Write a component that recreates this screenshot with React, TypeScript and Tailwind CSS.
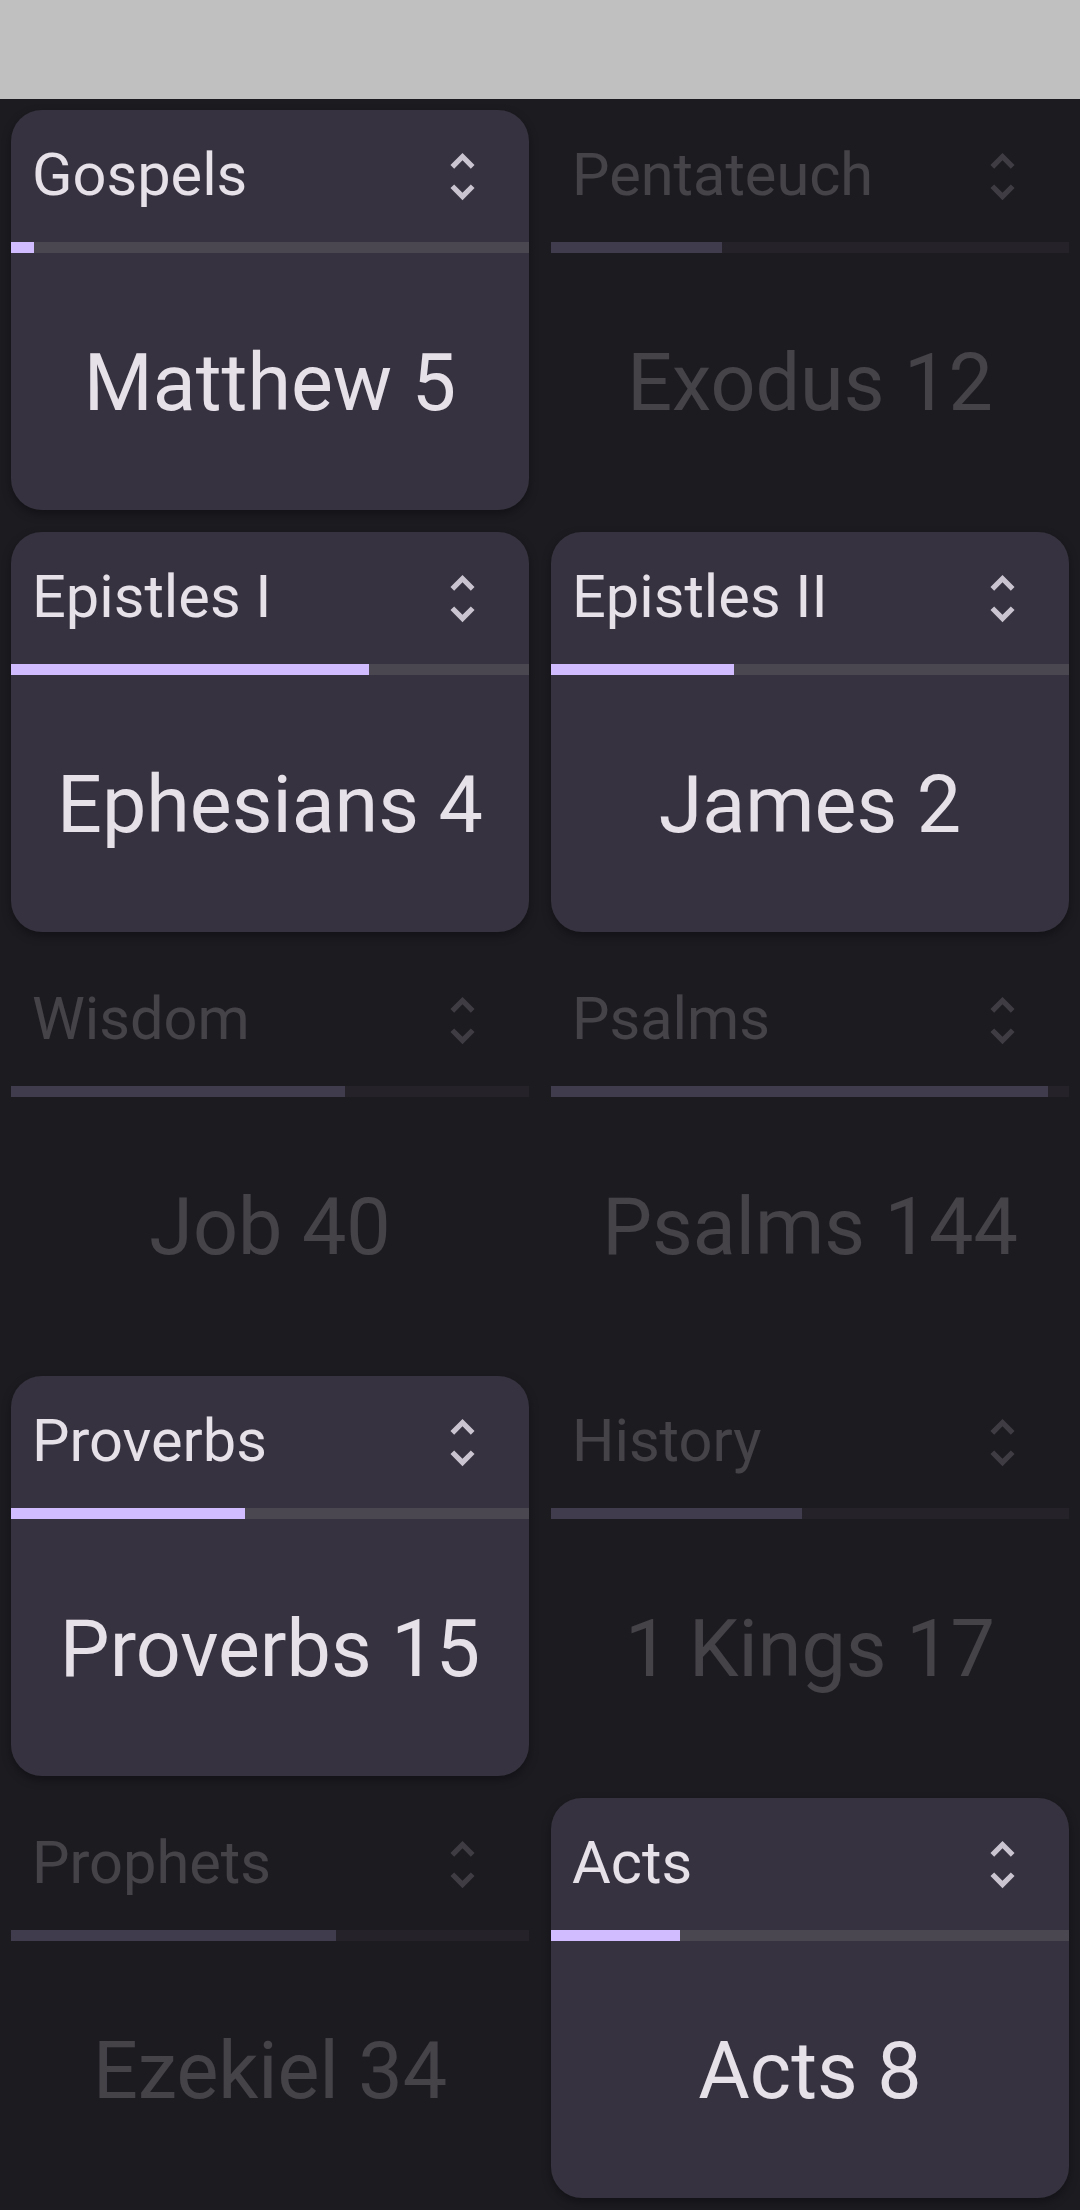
import React from 'react';

interface Plan {
  group: string;
  reading: string;
  progress: number;
  active: boolean;
}

const plans: Plan[] = [
  { group: 'Gospels', reading: 'Matthew 5', progress: 4.4, active: true },
  { group: 'Pentateuch', reading: 'Exodus 12', progress: 33.1, active: false },
  { group: 'Epistles I', reading: 'Ephesians 4', progress: 69.2, active: true },
  { group: 'Epistles II', reading: 'James 2', progress: 35.3, active: true },
  { group: 'Wisdom', reading: 'Job 40', progress: 64.5, active: false },
  { group: 'Psalms', reading: 'Psalms 144', progress: 95.9, active: false },
  { group: 'Proverbs', reading: 'Proverbs 15', progress: 45.2, active: true },
  { group: 'History', reading: '1 Kings 17', progress: 48.5, active: false },
  { group: 'Prophets', reading: 'Ezekiel 34', progress: 62.7, active: false },
  { group: 'Acts', reading: 'Acts 8', progress: 24.9, active: true },
];

const UnfoldMore: React.FC = () => (
  <svg viewBox="0 0 24 24" className="w-[63px] h-[63px] fill-[#cac4d0]">
    <path d="M12 5.83L15.17 9l1.41-1.41L12 3 7.41 7.59 8.83 9 12 5.83zm0 12.34L8.83 15l-1.41 1.41L12 21l4.59-4.59L15.17 15 12 18.17z" />
  </svg>
);

const PlanTile: React.FC<{ plan: Plan }> = ({ plan }) => (
  <div
    className={`h-[400px] flex flex-col overflow-hidden rounded-[31px] ${
      plan.active ? 'bg-[#36323f] shadow-[0_4px_10px_rgba(0,0,0,0.35)]' : 'opacity-20'
    }`}
  >
    <div className="h-[132px] flex items-center justify-between pl-[21px] pr-[35px]">
      <span className="text-[59.5px] leading-none text-[#e6e0e9]">{plan.group}</span>
      <UnfoldMore />
    </div>
    <div className="h-[11px] bg-[#4a4751]">
      <div className="h-full bg-[#d0bcff]" style={{ width: `${plan.progress}%` }} />
    </div>
    <div className="flex-1 flex items-center justify-center pt-[4px]">
      <span className="text-[79px] leading-none text-[#e6e0e9]">{plan.reading}</span>
    </div>
  </div>
);

export default function App() {
  return (
    <div className="w-[1080px] h-[2210px] overflow-hidden bg-[#1c1b20] font-['Roboto','Noto_Sans',sans-serif]">
      <div className="h-[99px] bg-[#c0c0c0]" />
      <div className="grid grid-cols-2 gap-[22px] px-[11px] pt-[11px]">
        {plans.map((plan) => (
          <PlanTile key={plan.group} plan={plan} />
        ))}
      </div>
    </div>
  );
}
